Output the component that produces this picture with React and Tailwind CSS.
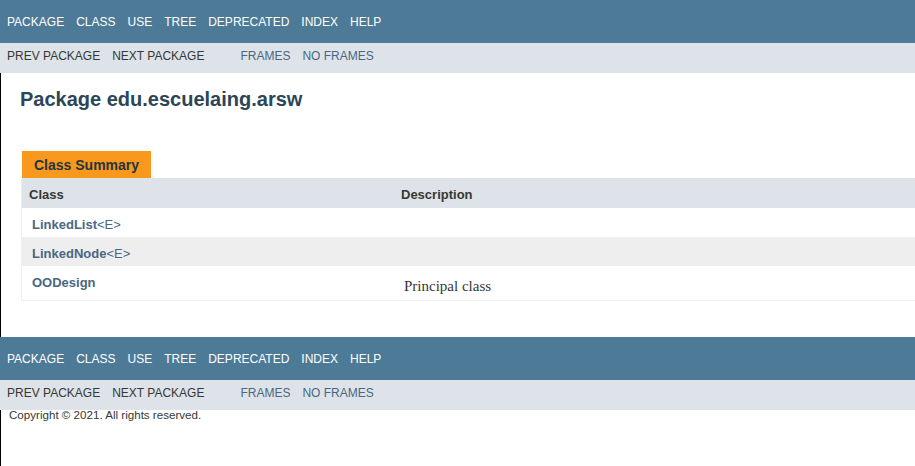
const topItems = ["Package", "Class", "Use", "Tree", "Deprecated", "Index", "Help"];

const rows = [
  { name: "LinkedList", generic: "<E>", desc: "" },
  { name: "LinkedNode", generic: "<E>", desc: "" },
  { name: "OODesign", generic: "", desc: "Principal class" },
];

const NavBars = () => (
  <div className="-ml-px">
    <div className="h-[43px] bg-[#4D7A97] pt-[15px]">
      <ul className="flex pl-px text-[12px] leading-[14px] text-white uppercase">
        {topItems.map((item) => (
          <li key={item} className="px-[6px]">{item}</li>
        ))}
      </ul>
    </div>
    <div className="h-[30px] bg-[#DEE3E9] pt-[6px] flex text-[12px] leading-[14px] uppercase">
      <ul className="flex pl-px text-[#353833]">
        <li className="px-[6px]">Prev Package</li>
        <li className="px-[6px]">Next Package</li>
      </ul>
      <ul className="flex ml-[24px] text-[#4A6782]">
        <li className="px-[6px]">Frames</li>
        <li className="px-[6px]">No Frames</li>
      </ul>
    </div>
  </div>
);

export default function App() {
  return (
    <div
      className="min-h-[466px] bg-white border-l border-black text-[#353833]"
      style={{ fontFamily: '"Liberation Sans", Arial, sans-serif' }}
    >
      <NavBars />

      <h1 className="mt-[15px] pl-[19px] text-[20px] leading-[22px] font-bold text-[#2C4557]">
        Package edu.escuelaing.arsw
      </h1>

      <div className="ml-[20px] mt-[41px]">
        <div className="ml-px inline-block bg-[#F8981D] px-[12px] pt-[6px] pb-[5px] text-[14px] leading-[16px] font-bold text-[#253441]">
          Class Summary
        </div>
        <div className="border-l border-b border-[#EEEEEF]">
          <div className="flex h-[30px] bg-[#DEE3E9] pt-[9px] text-[13px] leading-[15px] font-bold text-[#353833]">
            <div className="w-[372px] pl-[7px]">Class</div>
            <div className="pl-[7px]">Description</div>
          </div>
          {rows.map((r, i) => (
            <div
              key={r.name}
              className={`flex ${r.desc ? "h-[34px]" : "h-[29px]"} ${i % 2 === 1 ? "bg-[#EEEEEF]" : "bg-white"}`}
            >
              <div className="w-[372px] pl-[10px] pt-[9px] text-[13px] leading-[15px] text-[#4A6782]">
                <span className="font-bold">{r.name}</span>
                {r.generic}
              </div>
              <div
                className="pl-[10px] pt-[12px] text-[15px] leading-[17px] text-[#353833]"
                style={{ fontFamily: '"Liberation Serif", Georgia, serif' }}
              >
                {r.desc}
              </div>
            </div>
          ))}
        </div>
      </div>

      <div className="mt-[36px]">
        <NavBars />
      </div>
      <p className="-mt-px pl-[8px] text-[11.6px] leading-[12px] text-[#353833]">
        Copyright © 2021. All rights reserved.
      </p>
    </div>
  );
}
